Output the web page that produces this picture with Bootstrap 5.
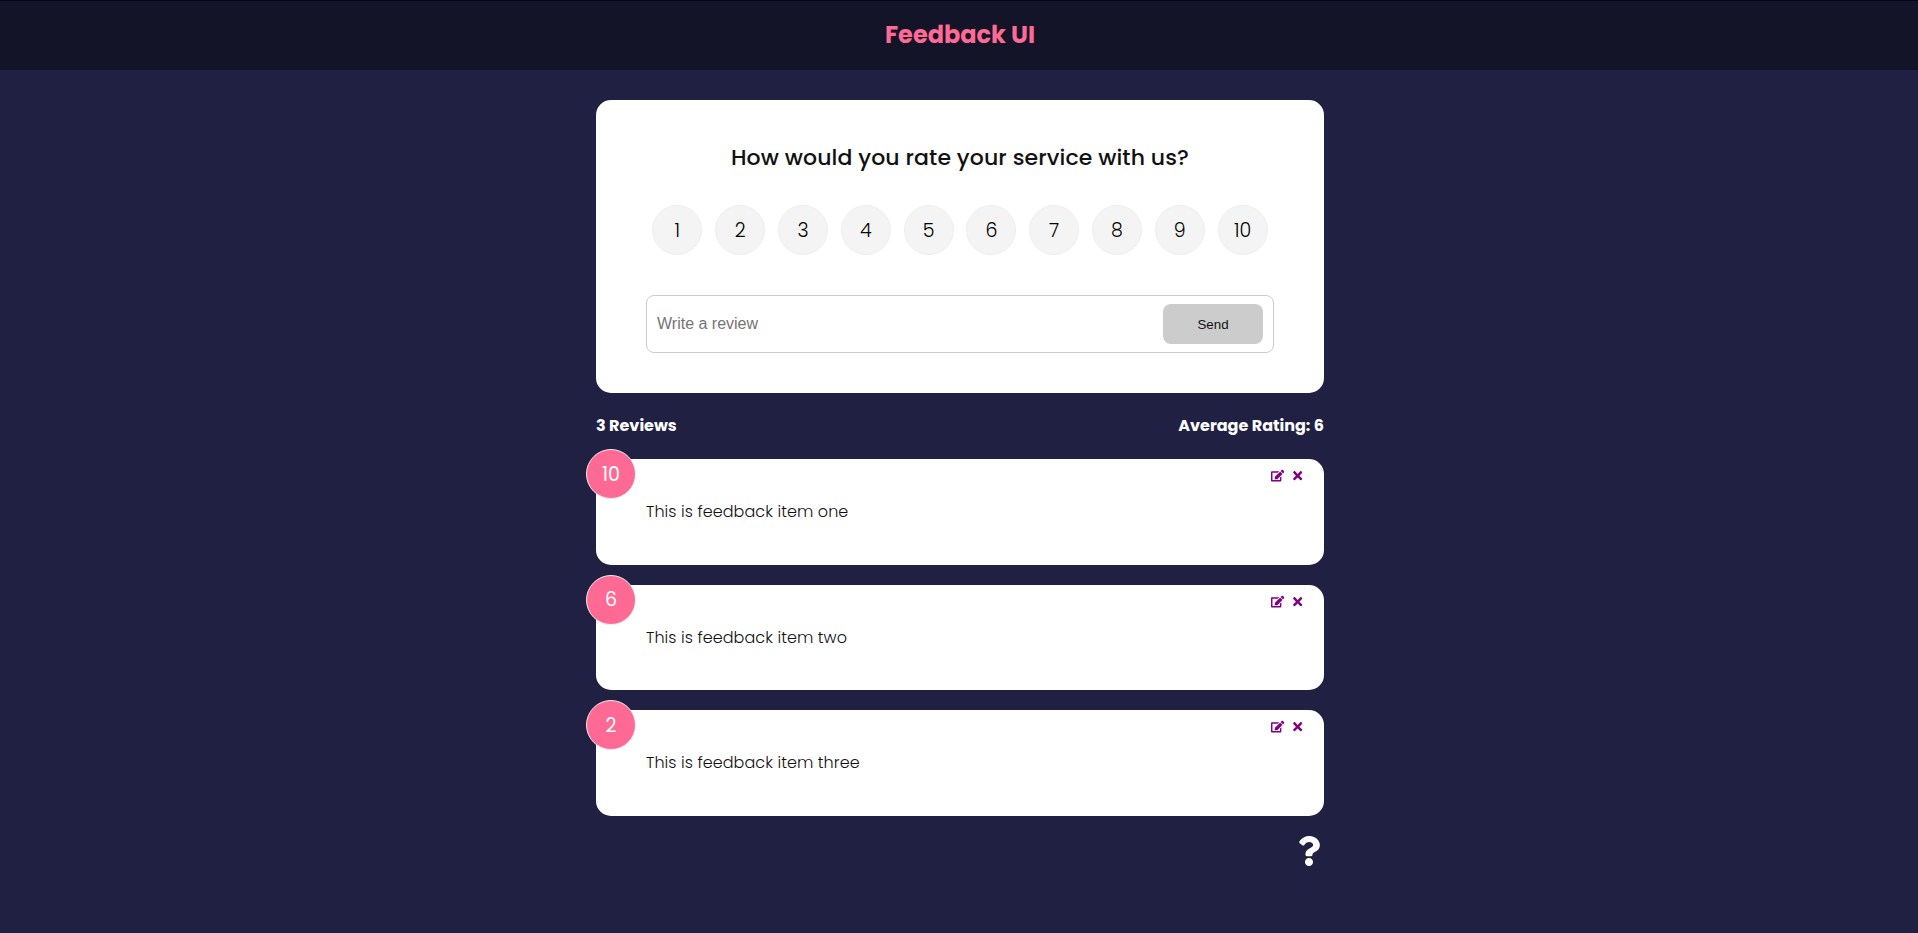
<!DOCTYPE html>
<html lang="en">
<head>
<meta charset="utf-8">
<meta name="viewport" content="width=device-width, initial-scale=1">
<title>Feedback UI</title>
<link href="https://cdn.jsdelivr.net/npm/bootstrap@5.3.0/dist/css/bootstrap.min.css" rel="stylesheet">
<style>
body { background: #202142; color: #111; font-family: Poppins, Inter, "Open Sans", sans-serif; font-size: 16px; line-height: 1.6; }
.topbar { height: 70px; padding: 0 0 2px 2px; background: #131427; border-top: 1px solid #020220; }
.topbar h2 { color: #ff6a95; font-size: 24px; font-weight: 700; line-height: 1; }
.page-wrap { padding-left: 2px; }
.page-column { width: 728px; padding-top: 30px; }
.panel { border: 0; border-radius: 15px; color: #111; }
.rate-panel { height: 293px; padding: 40px 50px; }
.rate-panel h2 { font-size: 22px; font-weight: 500; line-height: 35px; letter-spacing: .1px; }
.rate-list { margin: 30px 0 40px; }
.rate { width: 50px; height: 50px; padding-top: 2px; background: #f4f4f4; border: 1px solid #eee; font-size: 19px; font-weight: 300; color: #000; }
.review-box { height: 58px; border: 1px solid #ccc; border-radius: 8px; padding: 8px 10px; }
.review-box input { border: 0; outline: 0; font: 16px/1.2 "Liberation Sans", sans-serif; }
.review-box input::placeholder { color: #757575; opacity: 1; }
.send { width: 100px; height: 40px; padding: 1px 0 0; border: 0; border-radius: 8px; background: #ccc; color: #111; font: 13.33px/1 "Liberation Sans", sans-serif; }
.stats { height: 66px; color: #fff; font-weight: 700; }
.item { height: 105.6px; padding: 40px 50px; margin-bottom: 20px; font-weight: 300; letter-spacing: .07px; }
.score { top: -10px; left: -10px; width: 50px; height: 50px; padding-top: 2px; background: #ff6a95; border: 1px solid #eee; color: #fff; font-size: 19px; font-weight: 400; }
.tools { top: 10px; right: 20px; gap: 6.7px; }
.tools button { line-height: 0; color: purple; }
.help { color: #fff; line-height: 0; }
</style>
</head>
<body>
<svg class="d-none">
  <symbol id="edit" viewBox="0 0 576 512"><path d="M402.6 83.2l90.2 90.2c3.8 3.8 3.8 10 0 13.8L274.4 405.6l-92.8 10.3c-12.4 1.4-22.9-9.1-21.5-21.5l10.3-92.8L388.8 83.2c3.8-3.8 10-3.8 13.8 0zm162-22.9l-48.8-48.8c-15.2-15.2-39.9-15.2-55.2 0l-35.4 35.4c-3.8 3.8-3.8 10 0 13.8l90.2 90.2c3.8 3.8 10 3.8 13.8 0l35.4-35.4c15.2-15.3 15.2-40 0-55.2zM384 346.2V448H64V128h229.8c3.2 0 6.2-1.3 8.5-3.5l40-40c7.6-7.6 2.2-20.5-8.5-20.5H48C21.5 64 0 85.5 0 112v352c0 26.5 21.5 48 48 48h352c26.5 0 48-21.5 48-48V306.2c0-10.7-12.9-16-20.5-8.5l-40 40c-2.2 2.3-3.5 5.3-3.5 8.5z"/></symbol>
  <symbol id="times" viewBox="0 0 352 512"><path d="M242.72 256l100.07-100.07c12.28-12.28 12.28-32.19 0-44.48l-22.24-22.24c-12.28-12.28-32.19-12.28-44.48 0L176 189.28 75.93 89.21c-12.28-12.28-32.19-12.28-44.48 0L9.21 111.45c-12.28 12.28-12.28 32.19 0 44.48L109.28 256 9.21 356.07c-12.28 12.28-12.28 32.19 0 44.48l22.24 22.24c12.28 12.28 32.2 12.28 44.48 0L176 322.72l100.07 100.07c12.28 12.28 32.2 12.28 44.48 0l22.24-22.24c12.28-12.28 12.28-32.19 0-44.48L242.72 256z"/></symbol>
</svg>
<header class="topbar d-flex align-items-center justify-content-center"><h2 class="m-0">Feedback UI</h2></header>
<div class="page-wrap">
<main class="page-column mx-auto">
  <form class="card panel rate-panel">
    <h2 class="text-center m-0">How would you rate your service with us?</h2>
    <ul class="rate-list list-unstyled d-flex justify-content-around">
      <li class="rate rounded-circle d-flex align-items-center justify-content-center">1</li>
      <li class="rate rounded-circle d-flex align-items-center justify-content-center">2</li>
      <li class="rate rounded-circle d-flex align-items-center justify-content-center">3</li>
      <li class="rate rounded-circle d-flex align-items-center justify-content-center">4</li>
      <li class="rate rounded-circle d-flex align-items-center justify-content-center">5</li>
      <li class="rate rounded-circle d-flex align-items-center justify-content-center">6</li>
      <li class="rate rounded-circle d-flex align-items-center justify-content-center">7</li>
      <li class="rate rounded-circle d-flex align-items-center justify-content-center">8</li>
      <li class="rate rounded-circle d-flex align-items-center justify-content-center">9</li>
      <li class="rate rounded-circle d-flex align-items-center justify-content-center">10</li>
    </ul>
    <div class="review-box d-flex align-items-center">
      <input class="flex-grow-1 p-0" type="text" placeholder="Write a review">
      <button class="send btn" type="button">Send</button>
    </div>
  </form>
  <div class="stats d-flex align-items-center justify-content-between"><span>3 Reviews</span><span>Average Rating: 6</span></div>
  <article class="card panel item">
    <div class="score position-absolute rounded-circle d-flex align-items-center justify-content-center">10</div>
    <div class="tools position-absolute d-flex"><button class="btn p-0 border-0" aria-label="Edit"><svg width="13.33" height="13.33" fill="currentColor"><use href="#edit"/></svg></button><button class="btn p-0 border-0" aria-label="Delete"><svg width="13.33" height="13.33" fill="currentColor"><use href="#times"/></svg></button></div>
    <div>This is feedback item one</div>
  </article>
  <article class="card panel item">
    <div class="score position-absolute rounded-circle d-flex align-items-center justify-content-center">6</div>
    <div class="tools position-absolute d-flex"><button class="btn p-0 border-0" aria-label="Edit"><svg width="13.33" height="13.33" fill="currentColor"><use href="#edit"/></svg></button><button class="btn p-0 border-0" aria-label="Delete"><svg width="13.33" height="13.33" fill="currentColor"><use href="#times"/></svg></button></div>
    <div>This is feedback item two</div>
  </article>
  <article class="card panel item">
    <div class="score position-absolute rounded-circle d-flex align-items-center justify-content-center">2</div>
    <div class="tools position-absolute d-flex"><button class="btn p-0 border-0" aria-label="Edit"><svg width="13.33" height="13.33" fill="currentColor"><use href="#edit"/></svg></button><button class="btn p-0 border-0" aria-label="Delete"><svg width="13.33" height="13.33" fill="currentColor"><use href="#times"/></svg></button></div>
    <div>This is feedback item three</div>
  </article>
  <div class="help d-flex justify-content-end"><svg width="30" height="30" viewBox="0 0 384 512" fill="currentColor"><path d="M202.021 0C122.202 0 70.503 32.703 29.914 91.026c-7.363 10.58-5.093 25.086 5.178 32.874l43.138 32.709c10.373 7.865 25.132 6.026 33.253-4.148 25.049-31.381 43.63-49.449 82.757-49.449 30.764 0 68.816 19.799 68.816 49.631 0 22.552-18.617 34.134-48.993 51.164-35.423 19.86-82.299 44.576-82.299 106.405V320c0 13.255 10.745 24 24 24h72.471c13.255 0 24-10.745 24-24v-5.773c0-42.86 125.268-44.645 125.268-160.627C377.504 66.256 286.902 0 202.021 0zM192 373.459c-38.196 0-69.271 31.075-69.271 69.271 0 38.195 31.075 69.27 69.271 69.27s69.271-31.075 69.271-69.271-31.075-69.27-69.271-69.27z"/></svg></div>
</main>
</div>
<script src="https://cdn.jsdelivr.net/npm/bootstrap@5.3.0/dist/js/bootstrap.bundle.min.js"></script>
</body>
</html>
